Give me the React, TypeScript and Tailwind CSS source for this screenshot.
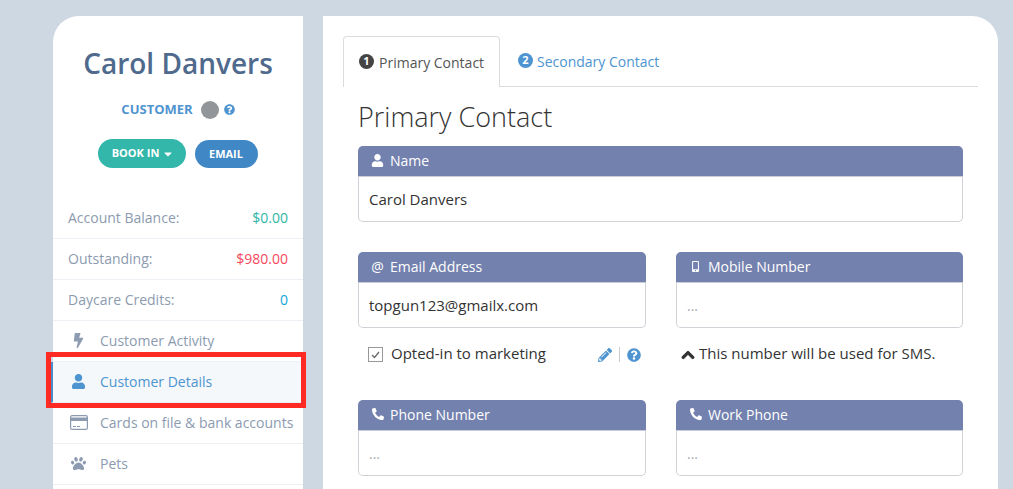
import type { ReactNode } from 'react';
import { FaBolt, FaCaretDown, FaChevronUp, FaMobileAlt, FaPaw, FaPencilAlt, FaPhone, FaQuestionCircle, FaUser } from 'react-icons/fa';

const CardIcon = () => (
  <svg width="18" height="15" viewBox="0 0 18 15">
    <rect x="0.6" y="0.6" width="16.8" height="13.8" rx="1.5" fill="none" stroke="currentColor" strokeWidth="1.2" />
    <rect x="1" y="2.5" width="16" height="3.5" fill="currentColor" />
    <rect x="3" y="11" width="3" height="1" fill="currentColor" />
    <rect x="7" y="11" width="3" height="1" fill="currentColor" />
  </svg>
);

const StatRow = ({ label, value, color }: { label: string; value: string; color: string }) => (
  <div className="flex h-[41px] items-center justify-between border-b border-[#edf1f5] px-[15px] pb-[2px] text-[14px]">
    <span className="text-[#8c9bb0]">{label}</span>
    <span className={color}>{value}</span>
  </div>
);

const NavRow = ({ icon, label, active }: { icon: ReactNode; label: string; active?: boolean }) => (
  <div
    className={
      active
        ? 'ml-[-2px] flex h-[41px] items-center border-b border-l-2 border-[#edf1f5] border-l-[#4a8cc9] bg-[#f5f8fa] pb-[2px] text-[14px] text-[#4d94d1]'
        : 'flex h-[41px] items-center border-b border-[#edf1f5] pb-[2px] text-[14px] text-[#8c9bb0]'
    }
  >
    <span className="flex w-[47px] shrink-0 justify-center pl-[4px]">{icon}</span>
    <span className="whitespace-nowrap">{label}</span>
  </div>
);

const Field = ({ icon, label, value }: { icon: ReactNode; label: string; value?: string }) => (
  <div>
    <div className="flex h-[31px] items-center rounded-t-[5px] border-b border-[#c9ccd3] bg-[#7381ae] pb-[2px] pl-[13px] text-[14px] text-white">
      <span className="flex w-[13px] justify-center">{icon}</span>
      <span className="ml-[6px]">{label}</span>
    </div>
    <div className="flex h-[45px] items-center rounded-b-[5px] border border-t-0 border-[#cfd2d6] px-[10px] text-[15px] text-[#333]">
      {value ?? <span className="text-[14px] text-[#aaa]">...</span>}
    </div>
  </div>
);

const App = () => {
  return (
    <div className="relative flex h-[489px] gap-5 overflow-hidden bg-[#cdd8e3] pl-[53px] pt-4 font-['Open_Sans',sans-serif]">
      {/* Sidebar */}
      <aside className="h-[600px] w-[250px] shrink-0 rounded-tl-[26px] bg-white">
        <h1 className="mt-[27px] text-center text-[28px] font-semibold leading-[40px] text-[#4f6a8c]">Carol Danvers</h1>
        <div className="mt-[16px] flex h-[20px] items-center justify-center">
          <span className="mt-[1px] text-[13px] font-bold text-[#4f94d0]">CUSTOMER</span>
          <span className="ml-[8px] mt-[2px] h-[18px] w-[18px] rounded-full bg-[#929599]" />
          <FaQuestionCircle className="ml-[5px] mt-[1px] text-[#4f94d0]" size={11} />
        </div>
        <div className="mt-[20px] flex items-end justify-center gap-[9px] pr-[1px]">
          <button className="flex h-[29px] w-[88px] items-center justify-center rounded-full bg-[#33b7aa] pl-[3px] text-[11px] font-bold text-white">
            BOOK IN
            <FaCaretDown className="ml-[3px]" size={12} />
          </button>
          <button className="h-[28px] w-[63px] rounded-full bg-[#3f88c5] text-[11px] font-bold text-white">EMAIL</button>
        </div>
        <div className="mt-[30px]">
          <StatRow label="Account Balance:" value="$0.00" color="text-[#2fb5a8]" />
          <StatRow label="Outstanding:" value="$980.00" color="text-[#f4485c]" />
          <StatRow label="Daycare Credits:" value="0" color="text-[#12a5d8]" />
          <NavRow icon={<FaBolt size={15} />} label="Customer Activity" />
          <NavRow icon={<FaUser size={15} />} label="Customer Details" active />
          <NavRow icon={<CardIcon />} label="Cards on file & bank accounts" />
          <NavRow icon={<FaPaw size={15} />} label="Pets" />
        </div>
      </aside>

      {/* Main panel */}
      <main className="h-[600px] w-[675px] shrink-0 rounded-tr-[26px] bg-white px-5 pt-5">
        <div className="flex h-[51px] border-b border-[#dcdcdc] text-[14px]">
          <div className="mb-[-1px] flex h-[51px] w-[157px] items-center rounded-t-[4px] border border-b-0 border-[#dcdcdc] bg-white pl-[15px] text-[#555]">
            <span className="mb-[2px] mr-[5px] flex h-[15px] w-[15px] items-center justify-center rounded-full bg-[#444] text-[11px] font-bold text-white">1</span>
            Primary Contact
          </div>
          <div className="flex items-center pl-[18px] text-[#4d94d1]">
            <span className="mb-[2px] mr-[4px] flex h-[15px] w-[15px] items-center justify-center rounded-full bg-[#4d94d1] text-[11px] font-bold text-white">2</span>
            Secondary Contact
          </div>
        </div>
        <div className="ml-[15px] w-[605px]">
          <h2 className="mt-[10px] text-[27px] font-light leading-[40px] text-[#333]">Primary Contact</h2>
          <div className="mt-[9px]">
            <Field icon={<FaUser size={13} />} label="Name" value="Carol Danvers" />
          </div>
          <div className="mt-[30px] grid grid-cols-[288px_287px] gap-x-[30px]">
            <Field icon={<span className="text-[14px]">@</span>} label="Email Address" value="topgun123@gmailx.com" />
            <Field icon={<FaMobileAlt size={11} />} label="Mobile Number" />
            <div className="flex h-[72px] items-start pl-[10px] pt-[14px] text-[15px] text-[#333]">
              <span className="mt-[5px] flex h-[15px] w-[15px] items-center justify-center border border-[#999] text-[#666]">
                <svg width="9" height="8" viewBox="0 0 9 8">
                  <path d="M1 4 L3.5 6.5 L8 1" fill="none" stroke="currentColor" strokeWidth="1.3" />
                </svg>
              </span>
              <span className="ml-[8px]">Opted-in to marketing</span>
              <span className="ml-auto mr-[5px] mt-[5px] flex items-center text-[#4d94d1]">
                <FaPencilAlt size={14} />
                <span className="mx-[7px] h-[15px] w-px bg-[#ccc]" />
                <FaQuestionCircle size={14} />
              </span>
            </div>
            <div className="flex h-[72px] items-start pl-[5px] pt-[14px] text-[15px] text-[#333]">
              <FaChevronUp className="mr-[4px] mt-[6px]" size={14} stroke="currentColor" strokeWidth={40} />
              This number will be used for SMS.
            </div>
            <Field icon={<FaPhone className="-scale-x-100" size={12} />} label="Phone Number" />
            <Field icon={<FaPhone className="-scale-x-100" size={12} />} label="Work Phone" />
          </div>
        </div>
      </main>

      {/* Annotation box over the active nav item */}
      <div className="absolute left-[46px] top-[352px] h-[56px] w-[260px] border-[5px] border-[#ff2a23]" />
    </div>
  );
};

export default App;
